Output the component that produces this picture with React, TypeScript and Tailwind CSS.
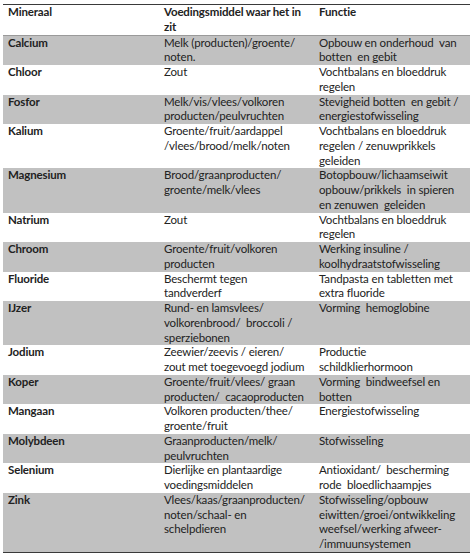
const ROWS: { name: string; food: string[]; fn: string[]; shade: boolean }[] = [
  { name: 'Calcium', food: ['Melk (producten)/groente/', 'noten.'], fn: ['Opbouw en onderhoud  van', 'botten  en gebit'], shade: true },
  { name: 'Chloor', food: ['Zout'], fn: ['Vochtbalans en bloeddruk', 'regelen'], shade: false },
  { name: 'Fosfor', food: ['Melk/vis/vlees/volkoren', 'producten/peulvruchten'], fn: ['Stevigheid botten  en gebit /', 'energiestofwisseling'], shade: true },
  { name: 'Kalium', food: ['Groente/fruit/aardappel', '/vlees/brood/melk/noten'], fn: ['Vochtbalans en bloeddruk', 'regelen / zenuwprikkels', 'geleiden'], shade: false },
  { name: 'Magnesium', food: ['Brood/graanproducten/', 'groente/melk/vlees'], fn: ['Botopbouw/lichaamseiwit', 'opbouw/prikkels  in spieren', 'en zenuwen  geleiden'], shade: true },
  { name: 'Natrium', food: ['Zout'], fn: ['Vochtbalans en bloeddruk', 'regelen'], shade: false },
  { name: 'Chroom', food: ['Groente/fruit/volkoren', 'producten'], fn: ['Werking insuline /', 'koolhydraatstofwisseling'], shade: true },
  { name: 'Fluoride', food: ['Beschermt tegen', 'tandverderf'], fn: ['Tandpasta en tabletten met', 'extra fluoride'], shade: false },
  { name: 'IJzer', food: ['Rund- en lamsvlees/', 'volkorenbrood/  broccoli /', 'sperziebonen'], fn: ['Vorming  hemoglobine'], shade: true },
  { name: 'Jodium', food: ['Zeewier/zeevis / eieren/', 'zout met toegevoegd jodium'], fn: ['Productie', 'schildklierhormoon'], shade: false },
  { name: 'Koper', food: ['Groente/fruit/vlees/ graan', 'producten/  cacaoproducten'], fn: ['Vorming  bindweefsel en', 'botten'], shade: true },
  { name: 'Mangaan', food: ['Volkoren producten/thee/', 'groente/fruit'], fn: ['Energiestofwisseling'], shade: false },
  { name: 'Molybdeen', food: ['Graanproducten/melk/', 'peulvruchten'], fn: ['Stofwisseling'], shade: true },
  { name: 'Selenium', food: ['Dierlijke en plantaardige', 'voedingsmiddelen'], fn: ['Antioxidant/  bescherming', 'rode  bloedlichaampjes'], shade: false },
  { name: 'Zink', food: ['Vlees/kaas/graanproducten/', 'noten/schaal- en', 'schelpdieren'], fn: ['Stofwisseling/opbouw', 'eiwitten/groei/ontwikkeling', 'weefsel/werking afweer-', '/immuunsystemen'], shade: true },
];

function Lines({ items }: { items: string[] }) {
  return (
    <>
      {items.map((l, i) => (
        <div key={i} className="whitespace-pre">{l}</div>
      ))}
    </>
  );
}

export default function App() {
  return (
    <div className="w-[474px] h-[559px] bg-white pt-[4px] pl-[3px]" style={{ fontFamily: 'Lato, "Open Sans", sans-serif' }}>
      <table className="w-[467px] table-fixed border-collapse text-[11.5px] tracking-[-0.15px] leading-[14.75px] text-[#222]">
        <colgroup>
          <col className="w-[156px]" />
          <col className="w-[155px]" />
          <col className="w-[156px]" />
        </colgroup>
        <thead>
          <tr className="border-t-[1.5px] border-b border-t-[#3a3a3a] border-b-[#9a9a9a] align-top">
            <th className="pl-[5px] text-left font-bold">Mineraal</th>
            <th className="pl-[5px] text-left font-bold">
              <Lines items={['Voedingsmiddel waar het in', 'zit']} />
            </th>
            <th className="pl-[5px] text-left font-bold">Functie</th>
          </tr>
        </thead>
        <tbody className="border-b border-b-[#3a3a3a]">
          {ROWS.map(r => {
            const n = Math.max(2, r.food.length, r.fn.length);
            return (
              <tr key={r.name} className={`align-top ${r.shade ? 'bg-[#c1c1c1]' : 'bg-white'}`} style={{ height: n * 14.75 }}>
                <td className="pl-[5px] font-bold">{r.name}</td>
                <td className="pl-[5px]"><Lines items={r.food} /></td>
                <td className="pl-[5px]"><Lines items={r.fn} /></td>
              </tr>
            );
          })}
        </tbody>
      </table>
    </div>
  );
}
